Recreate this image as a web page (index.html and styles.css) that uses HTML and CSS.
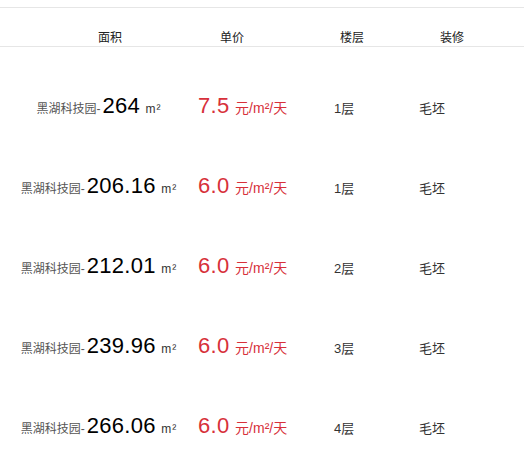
FILE: index.html
```html
<!DOCTYPE html>
<html lang="zh-CN">
<head>
    <meta charset="UTF-8">
    <meta name="viewport" content="width=device-width, initial-scale=1.0">
    <title>房源列表</title>
    <link rel="stylesheet" href="styles.css">
</head>
<body>
    <!-- 房源列表 -->
    <div class="list">
        <!-- 表头 -->
        <div class="list-head">
            <span class="head-cell head-area">面积</span>
            <span class="head-cell head-price">单价</span>
            <span class="head-cell head-floor">楼层</span>
            <span class="head-cell head-deco">装修</span>
        </div>

        <div class="list-body">
            <div class="row">
                <div class="cell area"><span class="park">黑湖科技园-</span><span class="num">264</span> <span class="unit">m²</span></div>
                <div class="cell price"><span class="num">7.5</span> <span class="price-unit">元/m²/天</span></div>
                <div class="cell floor">1层</div>
                <div class="cell deco">毛坯</div>
            </div>
            <div class="row">
                <div class="cell area"><span class="park">黑湖科技园-</span><span class="num">206.16</span> <span class="unit">m²</span></div>
                <div class="cell price"><span class="num">6.0</span> <span class="price-unit">元/m²/天</span></div>
                <div class="cell floor">1层</div>
                <div class="cell deco">毛坯</div>
            </div>
            <div class="row">
                <div class="cell area"><span class="park">黑湖科技园-</span><span class="num">212.01</span> <span class="unit">m²</span></div>
                <div class="cell price"><span class="num">6.0</span> <span class="price-unit">元/m²/天</span></div>
                <div class="cell floor">2层</div>
                <div class="cell deco">毛坯</div>
            </div>
            <div class="row">
                <div class="cell area"><span class="park">黑湖科技园-</span><span class="num">239.96</span> <span class="unit">m²</span></div>
                <div class="cell price"><span class="num">6.0</span> <span class="price-unit">元/m²/天</span></div>
                <div class="cell floor">3层</div>
                <div class="cell deco">毛坯</div>
            </div>
            <div class="row">
                <div class="cell area"><span class="park">黑湖科技园-</span><span class="num">266.06</span> <span class="unit">m²</span></div>
                <div class="cell price"><span class="num">6.0</span> <span class="price-unit">元/m²/天</span></div>
                <div class="cell floor">4层</div>
                <div class="cell deco">毛坯</div>
            </div>
        </div>
    </div>
</body>
</html>
```

FILE: styles.css
```css
/* Página base */
body {
    margin: 0;
    background: #fff;
    font-family: "Liberation Sans", "Noto Sans CJK SC", sans-serif;
    color: #333;
}

/* Contenedor con la línea superior */
.list {
    margin-top: 7px;
    border-top: 1px solid #e6e6e6;
}

/* Cabecera */
.list-head {
    display: flex;
    height: 39px;
    box-sizing: border-box;
    padding: 23px 0 0 49px;
    border-bottom: 1px solid #e6e6e6;
    font-size: 12px;
    line-height: 15px;
    color: #222;
}
.head-cell {
    text-align: center;
}
.head-area { width: 122px; }
.head-price { width: 122px; }
.head-floor { width: 118px; }
.head-deco { width: 82px; }

/* Filas */
.list-body {
    padding-top: 18px;
}
.row {
    display: grid;
    grid-template-columns: 198px 136px 85px 1fr;
    align-items: baseline;
    height: 80px;
    box-sizing: border-box;
    padding-top: 28px;
    line-height: 26px;
}

.cell {
    font-size: 13px;
    color: #333;
}
.area {
    text-align: center;
    white-space: nowrap;
}
.park {
    font-size: 12px;
    color: #555;
    margin-right: 2px;
}
.area .num {
    font-size: 22px;
    letter-spacing: 0.3px;
    color: #000;
}
.unit {
    font-size: 12px;
    letter-spacing: 1px;
    margin-left: 2px;
    color: #333;
}

.price {
    color: #d7303a;
    white-space: nowrap;
}
.price .num {
    font-size: 22px;
    letter-spacing: 0.3px;
}
.price-unit {
    font-size: 14px;
    margin-left: 2px;
}
```
